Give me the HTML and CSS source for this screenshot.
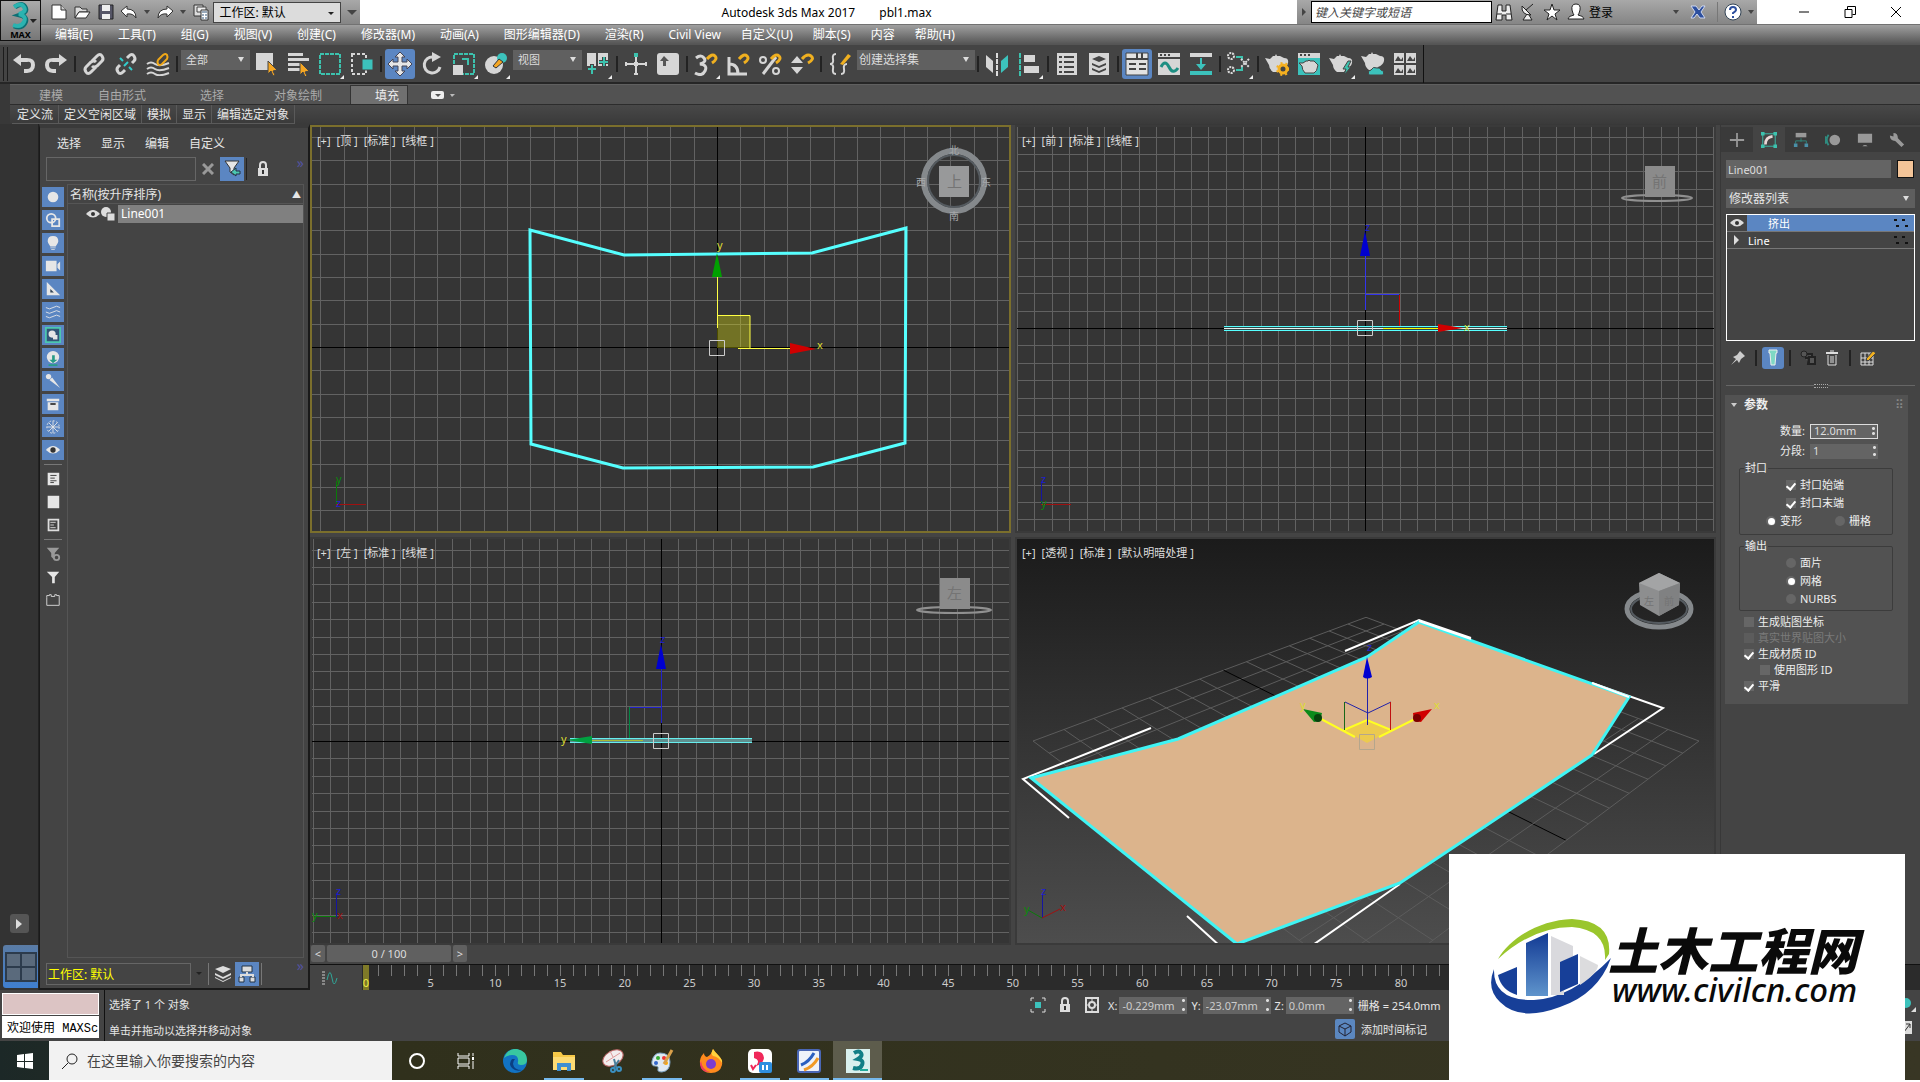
FILE: index.html
```html
<!DOCTYPE html>
<html lang="zh-CN">
<head>
  <meta charset="UTF-8" />
  <meta name="viewport" content="width=device-width, initial-scale=1.0" />
  <title>Autodesk 3ds Max 2017 pbl1.max</title>
  <link rel="stylesheet" href="styles.css">
</head>
<body>
  <div class="app">
    <header class="header">
      <button class="app-logo" aria-label="MAX">
        <svg width="32" height="28" viewBox="0 0 32 28"><path d="M10 5q7-5 10 0t-5 8q8 2 5 8t-11 3" fill="none" stroke="#0d6f74" stroke-width="5"/><path d="M9 5q7-5 10 0t-5 7q8 2 5 8t-11 3" fill="none" stroke="#2bb3b0" stroke-width="4"/><path d="M25 17h7l-4 4z" fill="#222"/></svg>
        <span>MAX</span>
      </button>
      <div class="title-bar">
        <div class="quick-access">
          <button aria-label="新建"><svg width="18" height="18" viewBox="0 0 18 18"><path d="M2 2h9l5 5v9H2z" fill="#fff" stroke="#333"/><path d="M11 2v5h5" fill="#ccc" stroke="#333"/></svg></button>
          <button aria-label="打开"><svg width="18" height="18" viewBox="0 0 18 18"><path d="M2 15V4h5l2 2h5v3H6z" fill="#ddd" stroke="#333"/><path d="M2 15l4-6h11l-4 6z" fill="#fff" stroke="#333"/></svg></button>
          <button aria-label="保存"><svg width="18" height="18" viewBox="0 0 18 18"><path d="M2 2h14v14H2z" fill="#556" stroke="#222"/><path d="M5 2h8v6H5zM5 11h8v5H5z" fill="#eee"/></svg></button>
          <button aria-label="撤消"><svg width="18" height="18" viewBox="0 0 18 18"><path d="M1 8l6-5v3q9 0 9 9-3-5-9-4v3z" fill="#fff" stroke="#333"/></svg></button>
          <i class="caret"></i>
          <button aria-label="重做"><svg width="18" height="18" viewBox="0 0 18 18"><path d="M17 8l-6-5v3Q2 6 2 15q3-5 9-4v3z" fill="#fff" stroke="#333"/></svg></button>
          <i class="caret"></i>
          <button aria-label="项目文件夹"><svg width="18" height="18" viewBox="0 0 18 18"><path d="M2 2h9v11H2z" fill="#ddd" stroke="#333"/><path d="M5 4h9v5H5z" fill="#eee" stroke="#444"/><path d="M9 7h7v10H9z" fill="#fff" stroke="#333"/><path d="M10 9h5M10 12h2M13 12h2M10 15h2M13 15h2" stroke="#357"/></svg></button>
          <label class="combo workspace"><select aria-label="工作区"><option>工作区: 默认</option></select></label>
          <i class="caret big"></i>
        </div>
        <div class="window-title"><span>Autodesk 3ds Max 2017</span><span>pbl1.max</span></div>
        <div class="info-center">
          <i class="caret side"></i>
          <input type="text" placeholder="键入关键字或短语" aria-label="搜索">
          <button aria-label="查找"><svg width="18" height="20" viewBox="0 0 18 20"><path d="M3 3h4v6h4V3h4l2 15h-6v-5H7v5H1z" fill="#eee" stroke="#222"/><path d="M2 12h5M11 12h5" stroke="#222"/></svg></button>
          <button aria-label="通讯中心"><svg width="18" height="20" viewBox="0 0 18 20"><path d="M3 4q-1 9 9 9zM8 12l-4 6h9l-3-5M7 8l7-6" fill="#eee" stroke="#222"/></svg></button>
          <button aria-label="收藏夹"><svg width="18" height="20" viewBox="0 0 18 20"><path d="M9 2l2 6h6l-5 4 2 6-5-4-5 4 2-6-5-4h6z" fill="#fff" stroke="#222"/></svg></button>
          <button class="login"><svg width="18" height="20" viewBox="0 0 18 20"><path d="M9 2q5 0 4 6-1 4-2 5 6 1 6 4H1q0-3 6-4-1-1-2-5-1-6 4-6z" fill="#fff" stroke="#222"/></svg>登录</button>
          <i class="caret push"></i>
          <button class="exchange" aria-label="Exchange"><svg width="18" height="18" viewBox="0 0 18 18"><path d="M2 3h5l3 4 3-4h3l-4 6 4 6h-5l-3-4-3 4H2l4-6z" fill="#2d4f9e" stroke="#cfd8f0"/></svg></button>
          <i class="split"></i>
          <button aria-label="帮助"><svg width="18" height="18" viewBox="0 0 18 18"><circle cx="9" cy="9" r="8" fill="#fff" stroke="#345"/><path d="M6 7q0-3 3-3t3 3q0 1-3 3v1M9 13v2" fill="none" stroke="#2d4f9e" stroke-width="2"/></svg></button>
          <i class="caret"></i>
        </div>
        <div class="window-buttons">
          <button aria-label="最小化"><svg width="12" height="12"><path d="M1 6h10" stroke="#000"/></svg></button>
          <button aria-label="还原"><svg width="12" height="12"><path d="M1 3.500h7v8h-7zM3.500 3.500v-3h8v8h-3" fill="none" stroke="#000"/></svg></button>
          <button aria-label="关闭"><svg width="12" height="12"><path d="M1 1l10 10M11 1L1 11" stroke="#000"/></svg></button>
        </div>
      </div>
      <nav class="menu-bar">
        <button>编辑(E)</button><button>工具(T)</button><button>组(G)</button><button>视图(V)</button><button>创建(C)</button><button>修改器(M)</button><button>动画(A)</button><button>图形编辑器(D)</button><button>渲染(R)</button><button>Civil View</button><button>自定义(U)</button><button>脚本(S)</button><button>内容</button><button>帮助(H)</button>
      </nav>
    </header>

    <div class="toolbar">
      <i class="grip"></i>
      <button aria-label="撤消"><svg viewBox="0 0 24 24"><path d="M1 8l8-6v4h6q8 0 8 7t-8 8h-3v-4h3q4 0 4-4t-4-3H9v4z" fill="#d6d6d6"/></svg></button>
      <button aria-label="重做"><svg viewBox="0 0 24 24"><path d="M23 8l-8-6v4H9q-8 0-8 7t8 8h3v-4H9q-4 0-4-4t4-3h6v4z" fill="#d6d6d6"/></svg></button>
      <i class="sep"></i>
      <button aria-label="选择并链接"><svg viewBox="0 0 24 24" fill="none" stroke="#d6d6d6" stroke-width="3"><path d="M10 9l5-5q3-3 5 0t0 5l-5 5q-3 2-5 0M14 15l-5 5q-3 3-5 0t0-5l5-5q3-2 5 0"/></svg></button>
      <button aria-label="取消链接"><svg viewBox="0 0 24 24" fill="none" stroke="#d6d6d6" stroke-width="3"><path d="M13 6l2-2q3-3 5 0t0 5l-2 2M11 18l-2 2q-3 3-5 0t0-5l2-2"/><path d="M9 9l-3-3M15 15l3 3M10 14l4-4" stroke="#3cc" stroke-width="2"/></svg></button>
      <button aria-label="绑定到空间扭曲"><svg viewBox="0 0 24 24" fill="none" stroke="#d6d6d6" stroke-width="2"><path d="M1 12q4-3 8 0t14-1M1 17q4-3 8 0t14-1M1 22q4-3 8 0t14-1"/><path d="M12 8l5-5q3-2 4 0t0 4l-5 5q-3 2-4 0t0-4" stroke="#f0a818"/></svg></button>
      <i class="sep"></i>
      <label class="combo small"><select aria-label="选择过滤器"><option>全部</option></select></label>
      <button aria-label="选择对象"><svg viewBox="0 0 24 24"><path d="M2 1h17v17H2z" fill="#d6d6d6"/><path d="M14 9l9 9-4 1 2 4-2 1-2-5-3 3z" fill="#f5a623" stroke="#444"/></svg></button>
      <button aria-label="按名称选择"><svg viewBox="0 0 24 24"><path d="M2 1h15v3H2zM2 6h21v3H2zM2 11h14v3H2zM2 16h14v3H2z" fill="#d6d6d6"/><path d="M14 10l9 9-4 1 2 4-2 1-2-5-3 3z" fill="#f5a623" stroke="#444"/></svg></button>
      <button class="fly" aria-label="矩形选择区域"><svg viewBox="0 0 24 24"><path d="M2 2h20v20H2z" fill="none" stroke="#3cc2ae" stroke-width="2" stroke-dasharray="4 1"/></svg></button>
      <button aria-label="窗口/交叉"><svg viewBox="0 0 24 24"><path d="M2 2h14v20H2z" fill="none" stroke="#d6d6d6" stroke-width="2" stroke-dasharray="3 2"/><path d="M12 7h11v11H12z" fill="#3cc2bc" stroke="#444"/></svg></button>
      <i class="sep"></i>
      <button class="active" aria-label="选择并移动"><svg viewBox="0 0 24 24"><path d="M12 0l5 5h-3v5h5V7l5 5-5 5v-3h-5v5h3l-5 5-5-5h3v-5H5v3l-5-5 5-5v3h5V5H7z" fill="#e6e6e6" stroke="#445" stroke-width="1"/></svg></button>
      <button aria-label="选择并旋转"><svg viewBox="0 0 24 24"><path d="M20 15a8 8 0 1 1-7-10" fill="none" stroke="#d6d6d6" stroke-width="3"/><path d="M12 0l9 5-9 5z" fill="#d6d6d6"/></svg></button>
      <button class="fly" aria-label="选择并缩放"><svg viewBox="0 0 24 24"><path d="M2 2h20v20H2z" fill="none" stroke="#3cc2ae" stroke-width="2" stroke-dasharray="4 1"/><path d="M1 13h10v10H1z" fill="#d6d6d6"/><path d="M10 7h6v6" fill="none" stroke="#3cc2ae" stroke-width="2"/></svg></button>
      <button class="fly" aria-label="选择并放置"><svg viewBox="0 0 24 24"><circle cx="10" cy="13" r="9" fill="#d6d6d6"/><circle cx="18" cy="6" r="5" fill="#3cc2bc"/><path d="M9 14l6-7 4 3-7 6z" fill="#f5a623" stroke="#333"/></svg></button>
      <label class="combo small"><select aria-label="参考坐标系"><option>视图</option></select></label>
      <button class="fly" aria-label="使用轴点中心"><svg viewBox="0 0 24 24"><path d="M1 1h9v13H1zM12 1h10v13H12z" fill="#d6d6d6"/><path d="M6 12v11M1 17h10M18 5v11M13 10h10" stroke="#444" stroke-width="4"/><path d="M6 13v9M2 17h8M18 5v9M13 10h9" stroke="#3cc2ae" stroke-width="2"/></svg></button>
      <i class="sep"></i>
      <button aria-label="选择并操纵"><svg viewBox="0 0 24 24"><path d="M12 5v18M1 12h22" stroke="#d6d6d6" stroke-width="2"/><path d="M10 10h4v4h-4zM1 10h2v4H1zM21 10h2v4h-2zM10 21h4v2h-4z" fill="#d6d6d6"/><path d="M10 1h4v4h-4z" fill="#3cc2ae"/></svg></button>
      <button aria-label="键盘快捷键覆盖"><svg viewBox="0 0 24 24"><rect x="1" y="1" width="22" height="22" rx="3" fill="#d6d6d6"/><path d="M8 4l5 5h-3v5H7V9H4z" fill="#555"/></svg></button>
      <i class="sep"></i>
      <button class="fly" aria-label="捕捉开关"><svg viewBox="0 0 24 24"><path d="M2 6q5-4 8 0t-4 6q8 1 5 7t-10 2" fill="none" stroke="#d6d6d6" stroke-width="3"/><path d="M13 7q5-6 8-3t-3 7" fill="none" stroke="#f0b020" stroke-width="3"/></svg></button>
      <button aria-label="角度捕捉"><svg viewBox="0 0 24 24"><path d="M3 5v17h18M3 12q9 0 9 10" fill="none" stroke="#d6d6d6" stroke-width="3"/><path d="M13 7q5-6 8-3t-3 7" fill="none" stroke="#f0b020" stroke-width="3"/></svg></button>
      <button aria-label="百分比捕捉"><svg viewBox="0 0 24 24"><circle cx="5" cy="8" r="3" fill="none" stroke="#d6d6d6" stroke-width="2"/><circle cx="18" cy="19" r="3" fill="none" stroke="#d6d6d6" stroke-width="2"/><path d="M18 5L5 22" stroke="#d6d6d6" stroke-width="3"/><path d="M13 7q5-6 8-3t-3 7" fill="none" stroke="#f0b020" stroke-width="3"/></svg></button>
      <button aria-label="微调器捕捉"><svg viewBox="0 0 24 24"><path d="M1 11l6-7 6 7zM1 15h12l-6 7z" fill="#d6d6d6"/><path d="M12 7q5-6 9-3t-3 7" fill="none" stroke="#f0b020" stroke-width="3"/></svg></button>
      <i class="sep"></i>
      <button aria-label="编辑命名选择集"><svg viewBox="0 0 24 24"><path d="M8 2Q4 2 5 7t-3 5q4 0 3 5t3 5M13 22q4 0 3-5t3-5" fill="none" stroke="#d6d6d6" stroke-width="2"/><path d="M12 12l8-10 3 2-8 9z" fill="#f0b020"/></svg></button>
      <label class="combo wide"><select aria-label="命名选择集"><option>创建选择集</option></select></label>
      <i class="sep"></i>
      <button aria-label="镜像"><svg viewBox="0 0 24 24"><path d="M1 3l7 6v12l-7-6z" fill="#d6d6d6"/><path d="M12 1v23" stroke="#ddd" stroke-width="2" stroke-dasharray="5 1"/><path d="M23 3l-7 6v12l7-6z" fill="#3cc2bc"/></svg></button>
      <button class="fly" aria-label="对齐"><svg viewBox="0 0 24 24"><path d="M3 1v23" stroke="#3cc2ae" stroke-width="2" stroke-dasharray="5 1"/><path d="M7 3h11v7H7zM7 14h15v7H7z" fill="#d6d6d6"/></svg></button>
      <i class="sep"></i>
      <button aria-label="切换场景资源管理器"><svg viewBox="0 0 24 24"><path d="M2 1h20v22H2z" fill="#d6d6d6"/><path d="M4 5h3M9 5h10M4 10h3M9 10h10M4 15h3M9 15h10M4 20h3M9 20h10" stroke="#444" stroke-width="2"/></svg></button>
      <button aria-label="切换层资源管理器"><svg viewBox="0 0 24 24"><path d="M2 1h20v22H2z" fill="#d6d6d6"/><path d="M5 7l7-3 7 3-7 3zM5 11l7 3 7-3v2l-7 3-7-3zM5 16l7 3 7-3v2l-7 3-7-3z" fill="#444"/></svg></button>
      <i class="sep"></i>
      <button class="active" aria-label="切换功能区"><svg viewBox="0 0 24 24"><path d="M1 1h22v22H1z" fill="#e2e2e2" stroke="#444"/><path d="M1 7h22M12 1v6M17 1v6M4 12h7M14 12h7M4 17h7M14 17h7" stroke="#444" stroke-width="2"/></svg></button>
      <button aria-label="曲线编辑器"><svg viewBox="0 0 24 24"><path d="M1 1h22v22H1z" fill="#d6d6d6"/><path d="M1 6h22M3 3h2M7 3h2M11 3h2" stroke="#444" stroke-width="2"/><path d="M4 15q4-8 8 0t9 1" fill="none" stroke="#1d8f83" stroke-width="3"/></svg></button>
      <button aria-label="图解视图"><svg viewBox="0 0 24 24"><path d="M1 1h22v4H1z" fill="#d6d6d6"/><path d="M1 19h22v4H1zM11 6h2v6h4l-5 6-5-6h4z" fill="#3cc2bc"/></svg></button>
      <i class="sep"></i>
      <button class="fly" aria-label="材质编辑器"><svg viewBox="0 0 24 24"><circle cx="4" cy="4" r="3" fill="none" stroke="#ddd" stroke-dasharray="2 1" stroke-width="2"/><circle cx="4" cy="18" r="3" fill="none" stroke="#ddd" stroke-dasharray="2 1" stroke-width="2"/><path d="M9 5h6v3M9 18h6v-3" fill="none" stroke="#3cc2ae" stroke-width="2"/><path d="M14 7l8 8M22 7l-8 8" stroke="#ddd" stroke-width="2" stroke-dasharray="2 1"/></svg></button>
      <i class="sep"></i>
      <button aria-label="渲染设置"><svg viewBox="0 0 24 24"><path d="M0 6l5 1 3-3h2l1-2 1 2h3l4 2q5 0 4 5-1 4-6 6l-2 3H8q-4-3-4-7z" fill="#d6d6d6"/><circle cx="18" cy="17" r="4" fill="#444" stroke="#f5b020" stroke-width="3"/><circle cx="18" cy="17" r="6" fill="none" stroke="#f5b020" stroke-width="2" stroke-dasharray="2 3"/></svg></button>
      <button aria-label="渲染帧窗口"><svg viewBox="0 0 24 24"><path d="M1 1h22v22H1z" fill="#3cc2bc"/><path d="M1 1h22v5H1z" fill="#d6d6d6"/><path d="M3 3h2M7 3h2M11 3h2" stroke="#444" stroke-width="2"/><path d="M2 11h4l3-2h2l1-1 1 1h4l4 4q-1 7-4 8H8q-3-3-3-7z" fill="#d6d6d6" stroke="#444"/></svg></button>
      <button class="fly" aria-label="渲染产品"><svg viewBox="0 0 24 24"><path d="M0 6l5 1 3-3h2l1-2 1 2h3l4 2q5 0 4 5-1 4-6 6l-2 3H8q-4-3-4-7z" fill="#d6d6d6"/><path d="M19 9l-5 8h3l-2 6 7-8h-3l3-6z" fill="#3cc2ae" stroke="#444"/></svg></button>
      <button aria-label="在云中渲染"><svg viewBox="0 0 24 24"><path d="M0 4l5 1 3-3h2l1-2 1 2h3l4 2q5 0 4 5-1 4-6 6l-2 3H8q-4-3-4-7z" fill="#d6d6d6"/><path d="M8 23q-2-4 2-5 2-4 6-2 3-1 4 2 4 1 2 5z" fill="#3cc2bc" stroke="#444"/></svg></button>
      <button aria-label="打开资源库"><svg viewBox="0 0 24 24"><path d="M1 1h10v10H1zM13 1h10v10H13zM1 13h10v10H1zM13 13h10v10H13z" fill="#d6d6d6"/><path d="M2 9l3-5 3 4 2-3v4zM14 9l3-5 3 4 2-3v4zM2 21l3-5 3 4 2-3v4zM14 21l3-5 3 4 2-3v4z" fill="#444"/></svg></button>
      <i class="toolbar-end"></i>
    </div>

    <div class="ribbon">
      <div class="ribbon-tabs">
        <button>建模</button><button>自由形式</button><button>选择</button><button>对象绘制</button><button class="current">填充</button>
        <button class="ribbon-toggle" aria-label="最小化"><svg width="28" height="10"><rect width="13" height="8" y="1" rx="2" fill="#eee"/><path d="M4 4h6L7 7z" fill="#555"/><path d="M19 4h5l-3 3z" fill="#bbb"/></svg></button>
      </div>
      <div class="ribbon-panels">
        <button>定义流</button><button>定义空闲区域</button><button>模拟</button><button>显示</button><button>编辑选定对象</button>
      </div>
    </div>

    <main class="main">
      <aside class="dock">
        <button class="play" aria-label="展开"><svg width="10" height="12"><path d="M2 1l6 5-6 5z" fill="#ddd"/></svg></button>
        <button class="layout" aria-label="视口布局"><svg width="32" height="30" viewBox="0 0 32 30"><path d="M1 1h30v28H1zM16 1v28M1 15h30" fill="#5a6a7c" stroke="#2c3b4c" stroke-width="2"/></svg></button>
      </aside>

      <section class="explorer">
        <nav class="explorer-menu"><button>选择</button><button>显示</button><button>编辑</button><button>自定义</button></nav>
        <div class="explorer-search">
          <input type="text" aria-label="查找对象">
          <button class="clear" aria-label="清除"><svg width="12" height="12"><path d="M1 1l10 10M11 1L1 11" stroke="#999" stroke-width="3"/></svg></button>
          <button class="on" aria-label="过滤器"><svg width="18" height="18"><path d="M2 1h14l-5 7v7l-4-3V8z" fill="#e6e6e6" stroke="#333"/><path d="M17 11h-4V8l-5 4 5 4v-2h4z" fill="#4cc7b0" stroke="#234"/></svg></button>
          <i class="bar"></i>
          <button class="lock" aria-label="锁定"><svg width="12" height="16"><path d="M3 7V4q0-3 3-3t3 3v3" fill="none" stroke="#ddd" stroke-width="2"/><path d="M1 7h10v8H1z" fill="#ddd"/><path d="M6 9v4" stroke="#333" stroke-width="2"/></svg></button>
          <span class="more">»</span>
        </div>
        <div class="explorer-body">
          <div class="filters">
            <button class="on" aria-label="几何体"><svg viewBox="0 0 18 18"><circle cx="9" cy="9" r="6"/></svg></button>
            <button class="on" aria-label="图形"><svg viewBox="0 0 18 18"><circle cx="7" cy="7" r="5" fill="none" stroke="#e6e6e6" stroke-width="2"/><path d="M8 8h8v8H8z" fill="none" stroke="#e6e6e6" stroke-width="2"/></svg></button>
            <button class="on" aria-label="灯光"><svg viewBox="0 0 18 18"><path d="M9 1q6 0 6 6 0 2-3 6H6Q3 9 3 7q0-6 6-6zM6 14h6v1H6zM7 16h4v1H7z"/></svg></button>
            <button class="on" aria-label="摄影机"><svg viewBox="0 0 18 18"><path d="M1 3h12v12H1zM14 7l3-3v10l-3-3z"/></svg></button>
            <button class="on" aria-label="辅助对象"><svg viewBox="0 0 18 18"><path d="M2 1l15 15H2z"/><path d="M6 9v4h4z" fill="#345"/></svg></button>
            <button class="on" aria-label="空间扭曲"><svg viewBox="0 0 18 18" class="lines"><path d="M1 4q4 3 8 0t8 0M1 9q4 3 8 0t8 0M1 14q4 3 8 0t8 0"/></svg></button>
            <button class="on" aria-label="组"><svg viewBox="0 0 18 18"><path d="M1 1h16v16H1z" fill="#357" stroke="#4cc7b0" stroke-width="2"/><circle cx="8" cy="8" r="4"/><path d="M9 9h5v5H9z"/></svg></button>
            <button class="on" aria-label="外部参考"><svg viewBox="0 0 18 18"><circle cx="9" cy="8" r="7"/><path d="M8 6h3v5h3l-5 4-4-4h3zM4 16h10v2H4z" fill="#289b86"/></svg></button>
            <button class="on" aria-label="骨骼"><svg viewBox="0 0 18 18"><circle cx="4" cy="4" r="3"/><path d="M5 8l3-3 9 12z"/></svg></button>
            <button class="on" aria-label="容器"><svg viewBox="0 0 18 18"><path d="M2 3h14v3H2zM3 7h12v9H3z"/><path d="M6 9h6" stroke="#333" stroke-width="2"/></svg></button>
            <button class="on" aria-label="冻结"><svg viewBox="0 0 18 18" class="lines"><path d="M9 2v14M2 9h14M4 4l10 10M14 4L4 14"/><circle cx="9" cy="9" r="7" fill="none" stroke-dasharray="2 2"/></svg></button>
            <button class="on" aria-label="隐藏"><svg viewBox="0 0 18 18"><path d="M1 9q8-9 16 0-8 8-16 0z"/><circle cx="9" cy="9" r="3" fill="#333"/></svg></button>
            <i class="rule"></i>
            <button aria-label="全部"><svg viewBox="0 0 18 18"><path d="M3 2h13v14H3z"/><path d="M6 5h7M6 8h5M6 11h7M6 13h4" stroke="#333"/></svg></button>
            <button aria-label="无"><svg viewBox="0 0 18 18"><path d="M3 2h13v14H3z"/></svg></button>
            <button aria-label="反转"><svg viewBox="0 0 18 18"><path d="M4 3h11v12H4z" fill="none" stroke="#ddd" stroke-width="2"/><path d="M6 6h6M6 9h4M6 12h6" stroke="#ddd"/></svg></button>
            <i class="rule"></i>
            <button class="dim" aria-label="配置过滤器"><svg viewBox="0 0 18 18"><path d="M2 2h14l-5 6v8l-4-4V8z"/><circle cx="13" cy="13" r="3" fill="#444" stroke="#999" stroke-width="2"/></svg></button>
            <button aria-label="过滤"><svg viewBox="0 0 18 18"><path d="M2 3h14l-5 6v7H8V9z"/></svg></button>
            <button aria-label="集合"><svg viewBox="0 0 18 18"><path d="M2 6V4h3V3h2v2h4V3h2v1h3v11H2z" fill="none" stroke="#ddd" stroke-width="1"/></svg></button>
          </div>
          <div class="object-list">
            <button class="list-head"><span>名称(按升序排序)</span><i>▲</i></button>
            <ul>
              <li>
                <svg width="14" height="12" viewBox="0 0 14 12"><path d="M0 6q7-8 14 0-7 7-14 0z" fill="#ddd"/><circle cx="7" cy="6" r="2" fill="#333"/></svg>
                <svg width="14" height="14" viewBox="0 0 14 14"><circle cx="5" cy="5" r="5" fill="#ddd"/><path d="M6 6h8v8H6z" fill="#ddd" stroke="#444"/></svg>
                <span>Line001</span>
              </li>
            </ul>
          </div>
        </div>
        <div class="explorer-foot">
          <label class="combo plain"><select aria-label="工作区"><option>工作区: 默认</option></select></label>
          <i class="bar"></i>
          <button aria-label="按层排序"><svg width="16" height="18"><path d="M0 4l8-3 8 3-8 4zM0 8l8 4 8-4v2l-8 4-8-4zM0 12l8 4 8-4v1l-8 4-8-4z" fill="#ddd"/></svg></button>
          <button class="on" aria-label="按层次排序"><svg width="18" height="18"><path d="M4 1h10v6H4zM1 12h5v5H1zM12 12h5v5h-5z" fill="#ddd" stroke="#234"/><path d="M9 7v3M3 12v-2h12v2" fill="none" stroke="#ddd" stroke-width="2"/></svg></button>
          <i class="bar"></i>
          <span class="more">»</span>
        </div>
      </section>

      <div class="work">
        <div class="work-top">
          <section class="viewports">
            <div class="viewport selected">
              <div class="view-label"><span>[+]</span><span>[顶 ]</span><span>[标准 ]</span><span>[线框 ]</span></div>
              <svg class="canvas">
                <defs>
                  <pattern id="gridTop" x="55" y="10" width="70" height="70" patternUnits="userSpaceOnUse"><path d="M0 0h1v70H0zM23 0h1v70h-1zM47 0h1v70h-1zM0 0h70v1H0zM0 23h70v1H0zM0 47h70v1H0z" fill="#626262"/></pattern>
                </defs>
                <rect width="100%" height="100%" fill="url(#gridTop)"/>
                <rect x="405" width="1" height="100%" fill="#000"/><rect y="220" width="100%" height="1" fill="#000"/>
                <path class="spline" d="M218 103L312 128 500 126 594 101 593 316 501 340 311 341 219 317z"/>
                <path d="M405 188h33v33h-33z" fill="#ff0" fill-opacity=".3"/>
                <path d="M405.500 201V150M405 188.500h33v33M426 221.500h52" fill="none" stroke="#ff4"/>
                <path d="M405 126l5 24h-10z" fill="#00a000"/><path d="M504 222l-26-6v11z" fill="#d00000"/>
                <path d="M397.500 213.500h15v15h-15z" class="pivot"/>
                <text x="405" y="122" class="yl">y</text><text x="505" y="222" class="yl">x</text>
                <path d="M24.500 378v-24" stroke="#0a7a0a"/><path d="M24 377.500h30" stroke="#a01010"/>
                <text x="24" y="356" class="gl">y</text><text x="24" y="380" class="bl">z</text>
                <circle cx="642" cy="54" r="30" fill="none" stroke="#85898c" stroke-width="6"/><circle cx="642" cy="54" r="26" fill="none" stroke="#555b60" stroke-width="2"/>
                <path d="M627 39h30v31h-30z" fill="#98999a"/><text x="635" y="60" class="cube">上</text>
                <text x="637" y="27" class="dir">北</text><text x="637" y="93" class="dir">南</text><text x="604" y="59" class="dir">西</text><text x="669" y="59" class="dir">东</text>
              </svg>
            </div>
            <div class="viewport">
              <div class="view-label"><span>[+]</span><span>[前 ]</span><span>[标准 ]</span><span>[线框 ]</span></div>
              <svg class="canvas">
                <defs>
                  <pattern id="gridFront" x="0" y="27" width="87" height="87" patternUnits="userSpaceOnUse"><path d="M0 0h1v87H0zM17 0h1v87h-1zM35 0h1v87h-1zM52 0h1v87h-1zM70 0h1v87h-1zM0 0h87v1H0zM0 17h87v1H0zM0 35h87v1H0zM0 52h87v1H0zM0 70h87v1H0z" fill="#626262"/></pattern>
                </defs>
                <rect width="100%" height="100%" fill="url(#gridFront)"/>
                <rect x="348" width="1" height="100%" fill="#000"/><rect y="201" width="100%" height="1" fill="#000"/>
                <path d="M207 199h283v5H207z" fill="#2a4a4a"/><path d="M207 199.500h283M207 203.500h283" stroke="#5ff"/><path d="M207 201.500h283" stroke="#eee"/>
                <path d="M348.500 183v-54M348 167.500h34" stroke="#33e" fill="none"/><path d="M382.500 168v31" stroke="#c00"/>
                <path d="M366 201.500h55" stroke="#ff0"/>
                <path d="M348 104l5 25h-10z" fill="#0000d0"/><path d="M446 201l-25-4v8z" fill="#d00000"/>
                <path d="M340.500 193.500h15v15h-15z" class="pivot"/>
                <text x="348" y="104" class="bl">z</text><text x="447" y="204" class="yl">x</text>
                <path d="M24.500 378v-24" stroke="#1515a0"/><path d="M24 377.500h30" stroke="#a01010"/>
                <text x="24" y="356" class="bl">z</text><text x="24" y="380" class="gl">y</text>
                <ellipse cx="640" cy="71" rx="35" ry="3" fill="none" stroke="#909090" stroke-width="2"/>
                <path d="M628 39h30v31h-30z" fill="#8b8b8b"/><text x="635" y="60" class="cube">前</text>
              </svg>
            </div>
            <div class="viewport">
              <div class="view-label"><span>[+]</span><span>[左 ]</span><span>[标准 ]</span><span>[线框 ]</span></div>
              <svg class="canvas">
                <defs>
                  <pattern id="gridLeft" x="1" y="28" width="87" height="87" patternUnits="userSpaceOnUse"><path d="M0 0h1v87H0zM17 0h1v87h-1zM35 0h1v87h-1zM52 0h1v87h-1zM70 0h1v87h-1zM0 0h87v1H0zM0 17h87v1H0zM0 35h87v1H0zM0 52h87v1H0zM0 70h87v1H0z" fill="#626262"/></pattern>
                </defs>
                <rect width="100%" height="100%" fill="url(#gridLeft)"/>
                <rect x="349" width="1" height="100%" fill="#000"/><rect y="202" width="100%" height="1" fill="#000"/>
                <path d="M258 199h182v5H258z" fill="#5f8f8f"/><path d="M258 199.500h182M258 203.500h182" stroke="#6ee"/><path d="M279 201.500h52" stroke="#ab3"/>
                <path d="M349.500 184v-54M349 168.500h-32" stroke="#22c" fill="none"/><path d="M317.500 168v31" stroke="#084"/>
                <path d="M349 105l5 25h-10z" fill="#0000d0"/><path d="M255 201l25-4v8z" fill="#00a040"/>
                <path d="M341.500 194.500h15v15h-15z" class="pivot"/>
                <text x="348" y="104" class="bl">z</text><text x="249" y="204" class="yl">y</text>
                <path d="M24.500 378v-24" stroke="#1515a0"/><path d="M4 377.500h20" stroke="#0a7a0a"/>
                <text x="24" y="356" class="bl">z</text><text x="0" y="380" class="gl">y</text><text x="25" y="380" class="rl">x</text>
                <ellipse cx="642" cy="71" rx="37" ry="3" fill="none" stroke="#909090" stroke-width="2"/>
                <path d="M628 39h30v31h-30z" fill="#8b8b8b"/><text x="635" y="60" class="cube">左</text>
              </svg>
            </div>
            <div class="viewport shaded">
              <div class="view-label"><span>[+]</span><span>[透视 ]</span><span>[标准 ]</span><span>[默认明暗处理 ]</span></div>
              <svg class="canvas">
                <g id="floor"></g>
                <path d="M328 112L402 81 454 99M575 144L646 169 577 215M134 189L6 240 52 279M170 377L204 408M383 345L293 408" fill="none" stroke="#fff" stroke-width="2"/>
                <path d="M402 83L612 158 575 216 383 344 220 405 14 239 161 200 350 118z" fill="#dcb48c" stroke="#3ff4f4" stroke-width="3"/>
                <path d="M402 82l52 18M575 144l37 14" stroke="#fff" stroke-width="2"/>
                <path d="M327 191l23-10 24 10-24 13z" fill="#f0d040" fill-opacity=".8"/>
                <path d="M304 180l34 18M398 180l-36 18M327 191l23-10 24 10" fill="none" stroke="#ff2" stroke-width="2"/>
                <path d="M350.500 186v-47M328 163l23 11 23-11" fill="none" stroke="#22a"/><path d="M327.500 163v28" stroke="#186818"/><path d="M373.500 163v28" stroke="#c01010"/>
                <path d="M350 118l5 20q-5 3-9 0z" fill="#0000d0"/>
                <path d="M286 170l19 4-2 8-6 1z" fill="#0a8a1a"/><path d="M415 170l-19 4 1 8 7 1z" fill="#d00000"/>
                <circle cx="301" cy="179" r="4" fill="#06420c"/><circle cx="400" cy="179" r="4" fill="#7a0000"/>
                <path d="M342.500 195.500h15v15h-15z" fill="none" stroke="#b5a68c"/>
                <text x="350" y="112" class="bl">z</text><text x="283" y="170" class="yl">y</text><text x="417" y="170" class="yl">x</text>
                <path d="M25.500 379v-24" stroke="#1515a0"/><path d="M25 379l18-9" stroke="#a01010"/><path d="M25 379l-14-8" stroke="#0a7a0a"/>
                <text x="24" y="356" class="bl">z</text><text x="7" y="374" class="gl">y</text><text x="43" y="372" class="rl">x</text>
                <ellipse cx="642" cy="70" rx="32" ry="18" fill="none" stroke="#85898c" stroke-width="5"/><ellipse cx="642" cy="70" rx="28" ry="14" fill="none" stroke="#555b60" stroke-width="2"/>
                <path d="M642 34l21 10-1 22-20 11-19-11-1-22z" fill="#8d8e8f"/><path d="M642 34l21 10-21 8-20-8z" fill="#a3a4a5"/><path d="M642 52l21-8-1 22-20 11z" fill="#808182"/>
                <text x="627" y="66" class="cube tiny">左</text><text x="647" y="66" class="cube tiny">前</text>
              </svg>
            </div>
          </section>

          <aside class="command">
            <div class="command-tabs">
              <button aria-label="创建"><svg viewBox="0 0 18 18"><path d="M9 1v16M1 9h16" stroke="#999" stroke-width="2"/></svg></button>
              <button class="current" aria-label="修改"><svg viewBox="0 0 18 18"><path d="M2 2h14v14H2z" fill="none" stroke="#3cc2ae"/><path d="M0 0h4v4H0zM14 0h4v4h-4zM0 14h4v4H0zM14 14h4v4h-4z" fill="#3cc2ae"/><path d="M5 14q0-8 8-9" fill="none" stroke="#ead6d6" stroke-width="3"/></svg></button>
              <button aria-label="层次"><svg viewBox="0 0 18 18"><path d="M3 1h12v5H3z" fill="#999"/><path d="M9 7v4M3 13v-3h12v3" fill="none" stroke="#2f8c80"/><path d="M1 13h4v4H1zM13 13h4v4h-4z" fill="#4a90a8"/></svg></button>
              <button aria-label="运动"><svg viewBox="0 0 18 18"><circle cx="11" cy="9" r="6" fill="#999"/><path d="M4 3q-4 6 0 12M1 5q-2 4 0 8" fill="none" stroke="#2f8c80" stroke-width="2"/></svg></button>
              <button aria-label="显示"><svg viewBox="0 0 18 18"><path d="M1 2h16v10H1zM6 16q3-3 6 0z" fill="#999"/></svg></button>
              <button aria-label="实用程序"><svg viewBox="0 0 18 18"><path d="M1 4l4 1V1q5 0 5 6l7 7-3 3-7-7Q1 10 1 4z" fill="#999"/></svg></button>
            </div>
            <div class="object-name"><input type="text" value="Line001" aria-label="对象名称"><button class="swatch" aria-label="对象颜色"></button></div>
            <label class="combo modifiers"><select aria-label="修改器列表"><option>修改器列表</option></select></label>
            <ul class="stack">
              <li class="current"><svg width="14" height="12" viewBox="0 0 14 12"><path d="M0 6q7-8 14 0-7 7-14 0z" fill="#ddd"/><circle cx="7" cy="6" r="2" fill="#333"/></svg><span class="indent">挤出</span><svg width="16" height="10"><path d="M1 1h3v2H1zM9 1h3v2H9zM3 7h3v2H3zM12 7h3v2h-3z" fill="#111"/></svg></li>
              <li><svg width="14" height="12"><path d="M4 1l5 5-5 5z" fill="#ddd"/></svg><span>Line</span><svg width="16" height="10"><path d="M1 1h3v2H1zM9 1h3v2H9zM3 7h3v2H3zM12 7h3v2h-3z" fill="#111"/></svg></li>
            </ul>
            <div class="stack-tools">
              <button aria-label="锁定堆栈"><svg width="16" height="16"><path d="M1 15l5-6-3-2 4-2 3-4 5 5-4 3-2 4-2-3z" fill="#ccc"/></svg></button>
              <i class="bar"></i>
              <button class="on" aria-label="显示最终结果"><svg width="10" height="18"><path d="M1 1h8v3H8l-1 12H3L2 4H1z" fill="#7fd8c4" stroke="#eee"/></svg></button>
              <i class="bar"></i>
              <button aria-label="使唯一"><svg width="16" height="16"><circle cx="4" cy="4" r="3" fill="#555" stroke="#222"/><path d="M7 4h5v4M5 8h4v5M9 7h6v7H8z" fill="#555" stroke="#222" stroke-width="2"/></svg></button>
              <button aria-label="移除修改器"><svg width="12" height="16"><path d="M0 3h12M4 1h4M2 5v10h8V5M5 6v7M7 6v7" fill="none" stroke="#ddd" stroke-width="1"/><path d="M0 2h12v2H0z" fill="#ddd"/></svg></button>
              <i class="bar"></i>
              <button aria-label="配置修改器集"><svg width="16" height="16"><path d="M1 3h12v12H1zM1 8h12M5 3v12M9 3v12M1 12h12" fill="none" stroke="#ddd"/><path d="M6 9l7-8 3 2-8 8z" fill="#f0b020" stroke="#444"/></svg></button>
            </div>
            <div class="splitter"><i></i></div>
            <form class="rollout">
              <h2><i class="caret light"></i>参数<span>⠿</span></h2>
              <div class="spin"><label for="amount">数量:</label><input class="focus" id="amount" type="text" value="12.0mm"></div>
              <div class="spin"><label for="segments">分段:</label><input id="segments" type="text" value="1"></div>
              <fieldset>
                <legend>封口</legend>
                <label class="in"><input type="checkbox" checked>封口始端</label>
                <label class="in"><input type="checkbox" checked>封口末端</label>
                <div class="pair"><label><input type="radio" name="cap" checked>变形</label><label><input type="radio" name="cap">栅格</label></div>
              </fieldset>
              <fieldset>
                <legend>输出</legend>
                <label class="in"><input type="radio" name="out">面片</label>
                <label class="in"><input type="radio" name="out" checked>网格</label>
                <label class="in"><input type="radio" name="out">NURBS</label>
              </fieldset>
              <div class="checks">
                <label><input type="checkbox">生成贴图坐标</label>
                <label class="off"><input type="checkbox" disabled>真实世界贴图大小</label>
                <label><input type="checkbox" checked>生成材质 ID</label>
                <label class="sub"><input type="checkbox">使用图形 ID</label>
                <label><input type="checkbox" checked>平滑</label>
              </div>
            </form>
          </aside>
        </div>
        <div class="time-slider"><button>&lt;</button><button class="frame">0 / 100</button><button>&gt;</button></div>
        <div class="track">
          <button class="curve" aria-label="打开迷你曲线编辑器"><svg width="16" height="14"><path d="M0 1h3M0 4h3M0 7h3M0 10h3M0 13h3" stroke="#ccc"/><path d="M5 9q3-14 5-2t5 0" fill="none" stroke="#2fa89a" stroke-width="1"/></svg></button>
          <div class="ruler" id="ruler"></div>
        </div>
      </div>
    </main>

    <footer class="status">
      <div class="listener"><input type="text" aria-label="宏录制器"><input type="text" aria-label="侦听器" value="欢迎使用 MAXScr"></div>
      <div class="prompts"><p>选择了 1 个 对象</p><p>单击并拖动以选择并移动对象</p></div>
      <div class="coords">
        <div class="coord-row">
          <button aria-label="孤立"><svg width="16" height="16"><path d="M1 4V1h3M12 1h3v3M15 12v3h-3M4 15H1v-3" fill="none" stroke="#ddd"/><path d="M5 5h6v6H5z" fill="#3cc2bc"/></svg></button>
          <button aria-label="选择锁定"><svg width="12" height="16"><path d="M3 7V4q0-3 3-3t3 3v3" fill="none" stroke="#ddd" stroke-width="2"/><path d="M1 7h10v8H1z" fill="#ddd"/><path d="M6 9v4" stroke="#333" stroke-width="2"/></svg></button>
          <button aria-label="绝对模式"><svg width="14" height="16"><path d="M1 1h12v14H1z" fill="none" stroke="#ddd" stroke-width="2"/><circle cx="7" cy="8" r="3" fill="none" stroke="#ddd" stroke-width="2"/><path d="M7 1v3M7 12v3M1 8h2M11 8h2" stroke="#ddd"/></svg></button>
          <label>X:<input type="text" value="-0.229mm"></label>
          <label>Y:<input type="text" value="-23.07mm"></label>
          <label>Z:<input type="text" value="0.0mm"></label>
          <span>栅格 = 254.0mm</span>
        </div>
        <button class="time-tag"><svg width="20" height="20" viewBox="0 0 20 20"><rect width="20" height="20" rx="2" fill="#5b87c0"/><path d="M10 4l6 3v6l-6 4-6-4V7zM4 7l6 3 6-3M10 10v7" fill="none" stroke="#223"/></svg>添加时间标记</button>
      </div>
      <div class="nav-tools">
        <svg width="14" height="16"><circle cx="4" cy="7" r="5" fill="#3cc2bc"/><path d="M14 11v5H9z" fill="#ddd"/></svg>
        <svg width="14" height="16"><path d="M0 1h10v13H0z" fill="#ddd"/><path d="M2 12l6-8M4 4h4v4" fill="none" stroke="#333"/></svg>
      </div>
    </footer>

    <div class="taskbar">
      <button class="start" aria-label="开始"><svg width="16" height="16"><path d="M0 2l7-1v7H0zM8 1l8-1v8H8zM0 9h7v6l-7-1zM8 9h8v7l-8-1z" fill="#fff"/></svg></button>
      <label class="search"><svg width="18" height="18"><circle cx="11" cy="7" r="5" fill="none" stroke="#222" stroke-width="1"/><path d="M7 11l-6 6" stroke="#222" stroke-width="1"/></svg><input type="text" placeholder="在这里输入你要搜索的内容"></label>
      <button aria-label="Cortana"><svg viewBox="0 0 24 24"><circle cx="12" cy="12" r="7" fill="none" stroke="#fff" stroke-width="2"/></svg></button>
      <button aria-label="任务视图"><svg viewBox="0 0 24 24"><path d="M4 4v3h11V4M4 20v-3h11v3M4 9h11v6H4zM19 4v3M19 12v8" fill="none" stroke="#fff"/><path d="M18 8h2v3h-2z" fill="#fff"/></svg></button>
      <button aria-label="Edge"><svg viewBox="0 0 24 24"><circle cx="12" cy="12" r="12" fill="#1273c4"/><path d="M1 9Q5-1 14 0q10 2 10 11 0 5-6 5-4 0-3-3 1-7-6-7-5 0-8 3z" fill="#38c6a0"/><path d="M9 10q-4 5 0 9 4 4 10 2-8 0-9-6 0-3 2-5z" fill="#0b3f83"/></svg></button>
      <button class="open" aria-label="文件资源管理器"><svg viewBox="0 0 24 24"><path d="M1 3h8l2 3h12v15H1z" fill="#f7c948"/><path d="M1 8h22v13H1z" fill="#fddb74"/><path d="M5 22v-8h14v8h-4v-4H9v4z" fill="#3f8fd2"/></svg></button>
      <button aria-label="截图工具"><svg viewBox="0 0 24 24"><ellipse cx="12" cy="9" rx="11" ry="7" fill="#f3eeee" stroke="#b66" transform="rotate(-30 12 9)"/><path d="M5 13l14-9M12 8l-3-6" stroke="#d99"/><path d="M13 10l3 11M18 11l-6 9" stroke="#4a7f9c" stroke-width="2"/><circle cx="18" cy="20" r="2" fill="none" stroke="#3a8fc0" stroke-width="2"/><circle cx="12" cy="21" r="2" fill="none" stroke="#3a8fc0" stroke-width="2"/></svg></button>
      <button class="open" aria-label="画图"><svg viewBox="0 0 24 24"><path d="M10 4q10 0 10 9t-8 10q-5 0-4-3t-3-3q-4 0-3-5 2-8 8-8z" fill="#dfe9f2" stroke="#7aa0c0"/><circle cx="8" cy="9" r="2" fill="#3a3"/><circle cx="14" cy="9" r="2" fill="#e33"/><circle cx="16" cy="14" r="2" fill="#fa0"/><circle cx="6" cy="14" r="2" fill="#36c"/><path d="M22 1l-8 14" stroke="#d9a04a" stroke-width="3"/></svg></button>
      <button aria-label="Firefox"><svg viewBox="0 0 24 24"><path d="M14 0q2 3 5 6 5 5 4 10-2 8-11 8T1 15Q0 9 5 4q0 3 3 4 5-3 6-8z" fill="#ff8a1e"/><path d="M14 0q2 3 5 6 5 5 4 8-3-6-9-7-3-2 0-7z" fill="#ffd23d"/><circle cx="12" cy="15" r="5" fill="#7a3bd0"/><path d="M2 12q1 9 9 11-9 1-10-8z" fill="#f03a5f"/></svg></button>
      <button class="open" aria-label="视频"><svg viewBox="0 0 24 24"><rect width="24" height="24" rx="5" fill="#fff"/><path d="M6 3q9-2 10 6-1 6-8 8 5-6-2-8z" fill="#f0285a"/><path d="M3 16l2 4 3-4" stroke="#f0285a" stroke-width="2" fill="none"/><rect x="11" y="13" width="13" height="11" rx="2" fill="#2f8fe0"/><path d="M15 16v5M19 16v5" stroke="#fff" stroke-width="2"/></svg></button>
      <button class="open" aria-label="看图"><svg viewBox="0 0 24 24"><rect x="1" y="1" width="22" height="22" rx="2" fill="#eef2fa" stroke="#4a67b5" stroke-width="2"/><path d="M4 16Q12 13 17 4" stroke="#2b5fc0" stroke-width="3" fill="none"/><path d="M7 21q9-3 14-12" stroke="#f09a28" stroke-width="3" fill="none"/></svg></button>
      <button class="open now" aria-label="3ds Max"><svg viewBox="0 0 24 24"><path d="M0 0h24v24H0z" fill="#d9f0ee"/><path d="M8 4q5-3 7 0t-3 6q6 1 4 6t-9 3" fill="none" stroke="#127f86" stroke-width="4"/><path d="M14 21h8" stroke="#2a9" stroke-width="2"/></svg></button>
    </div>
  </div>

  <div class="brand">
    <svg width="124" height="100" viewBox="0 0 124 100">
      <defs><linearGradient id="tower" x1="0" x2="0" y1="0" y2="1"><stop offset="0" stop-color="#123a94"/><stop offset="1" stop-color="#5f94cc"/></linearGradient></defs>
      <path d="M10 43C22 22 52 4 84 3q40 2 37 35l-4 6q2-30-33-33Q45 11 10 43z" fill="#9ac62c"/>
      <path d="M6 53q-1 32 40 31 38-2 77-42Q110 78 72 91q-40 15-60-5Q-2 73 6 53z" fill="#173f98"/>
      <path d="M63 20l22 10v10l-9 5v34H63z" fill="#d9d9dd"/><path d="M92 40l18 9q0 8-18 20z" fill="#dcdcde"/>
      <path d="M38 27l22-10v63H38z" fill="url(#tower)"/><path d="M10 59l19-8v28q-16-5-19-20z" fill="#173f98"/><path d="M72 46l18-8v30l-18 8z" fill="#173f98"/>
    </svg>
    <div class="brand-text"><strong>土木工程网</strong><span>www.civilcn.com</span></div>
  </div>

  <script src="script.js"></script>
</body>
</html>
```
FILE: styles.css
```css
* { box-sizing: border-box; }
body {
  margin: 0;
  background: #fff;
  color: #e6e6e6;
  font: 12px "Noto Sans", "Noto Sans CJK SC", sans-serif;
  overflow: hidden;
}
button, input, select {
  font: inherit;
  color: inherit;
  background: none;
  border: 0;
  padding: 0;
  margin: 0;
  border-radius: 0;
  white-space: nowrap;
}
button { display: flex; align-items: center; justify-content: center; }
ul, p, h2, fieldset { margin: 0; padding: 0; list-style: none; }
svg { display: block; flex: none; }
.app {
  display: flex;
  flex-direction: column;
  height: calc(100vh - 2px);
  background: #444;
}

/* 标题栏和菜单 */
.header {
  display: grid;
  grid-template-columns: 41px 1fr;
  grid-template-rows: 24px 21px;
  background: linear-gradient(#444 24px, #a0a0a0 25px, #555 44px);
}
.app-logo {
  grid-row: 1 / 3;
  height: 41px;
  flex-direction: column;
  background: linear-gradient(#aaa, #777);
  border: 1px solid #111;
  color: #000;
  font-size: 9px;
  font-weight: bold;
  line-height: 10px;
}
.title-bar { display: flex; background: #fff; color: #000; }
.quick-access, .info-center {
  display: flex;
  align-items: center;
  background: linear-gradient(#a8a8a8, #858585);
}
.quick-access { width: 319px; padding-left: 6px; }
.quick-access button { width: 24px; }
.caret {
  border: 3px solid transparent;
  border-top: 4px solid #444;
  border-bottom: 0;
  margin: 0 3px;
}
.caret.big { border-width: 5px 5px 0; }
.caret.side { border: 4px solid transparent; border-left-color: #444; border-right: 0; margin: 0 5px; }
.caret.light { border-top-color: #ccc; }
.window-title { flex: 1; display: flex; gap: 24px; align-items: center; justify-content: center; padding-right: 4px; }
.info-center { width: 460px; }
.info-center input {
  width: 181px;
  height: 22px;
  background: #fff;
  border: 1px solid #000;
  padding: 0 3px;
  font-style: italic;
}
.info-center input::placeholder, .search input::placeholder { color: #444; opacity: 1; }
.info-center button { width: 24px; }
.info-center .login { width: 52px; gap: 4px; }
.caret.push { margin-left: auto; }
.info-center .exchange { margin: 0 4px; }
.split { width: 1px; height: 20px; background: #777; margin: 0 3px; }
.window-buttons { display: flex; width: 163px; padding-left: 24px; }
.window-buttons button { width: 46px; }
.menu-bar { display: flex; gap: 25px; padding-left: 14px; }
.menu-bar button { color: #fff; height: 20px; }
.menu-bar button:nth-child(n+11) { margin-left: -5px; }

/* 下拉框 */
.combo { position: relative; display: flex; align-items: center; }
.combo select { appearance: none; width: 100%; height: 100%; padding-left: 5px; }
.combo::after {
  content: "";
  position: absolute;
  right: 6px;
  top: 7px;
  border: 3px solid transparent;
  border-top: 5px solid #ddd;
  border-bottom: 0;
  pointer-events: none;
}
.workspace { width: 130px; height: 21px; background: #dcdcdc; border: 1px solid #444; margin: 0 3px 0 1px; }
.workspace::after, .plain::after { border-top: 3px solid #222; top: 9px; }

/* 主工具栏 */
.toolbar {
  display: flex;
  height: 39px;
  align-items: center;
  border-bottom: 2px solid #262626;
}
.grip { width: 5px; height: 34px; margin: 0 0 0 3px; border: solid #1c1c1c; border-width: 0 1px; }
.toolbar button { width: 32px; height: 30px; position: relative; }
.toolbar button svg { width: 24px; height: 24px; }
.toolbar .active { background: #5b86c2; border-radius: 3px; width: 30px; margin: 0 1px; }
.fly::after {
  content: "";
  position: absolute;
  right: 2px;
  bottom: 0;
  border: 2px solid #eee;
  border-left-color: transparent;
  border-top-color: transparent;
}
.sep { width: 2px; height: 16px; margin: 0 2px; background: #222; }
.toolbar .combo { width: 69px; height: 20px; margin: 0 0 8px 1px; background: #606060; color: #ddd; font-size: 11px; }
.toolbar .wide { width: 118px; font-size: 12px; }
.toolbar .wide select { padding-left: 2px; }
.toolbar-end { width: 3px; height: 38px; border-right: 1px solid #111; }

/* 功能区 */
.ribbon { border-left: 10px solid #383838; }
.ribbon-tabs { display: flex; height: 20px; background: #525252; border: solid #606060; border-width: 1px 0 0; color: #aaa; }
.ribbon-tabs button { width: 88px; }
.ribbon-tabs button:first-child { width: 72px; padding-left: 10px; }
.ribbon-tabs button:nth-child(2) { width: 80px; }
.ribbon-tabs button:nth-child(3) { padding-left: 12px; }
.ribbon-tabs button:nth-child(4) { width: 96px; }
.ribbon-tabs .current { width: 58px; margin-left: 4px; padding-left: 16px; background: #707070; border: 1px solid #333; border-bottom: 0; color: #eee; }
.ribbon-tabs .ribbon-toggle { width: 70px; padding-left: 4px; }
.ribbon-panels { display: flex; height: 20px; background: linear-gradient(#484848, #3a3a3a); border-top: 1px solid #2c2c2c; padding-left: 2px; }
.ribbon-panels button { padding: 0 5px; height: 19px; border: solid #5a5a5a; border-width: 0 1px 1px 0; }

/* 左侧 */
.main { flex: 1; min-height: 0; display: flex; }
.dock {
  width: 39px;
  background: #333;
  border-right: 1px solid #222;
  display: flex;
  flex-direction: column;
  justify-content: flex-end;
  align-items: center;
  gap: 12px;
  padding-bottom: 2px;
}
.play { width: 19px; height: 19px; background: #555; border-radius: 3px; }
.layout { width: 35px; height: 43px; align-self: flex-end; background: linear-gradient(#5a7ba4, #3f7fd0); border-radius: 3px 0 0 3px; }
.explorer {
  width: 271px;
  display: flex;
  flex-direction: column;
  border: 1px solid #1a1a1a;
  border-width: 4px 2px 2px 1px;
  border-top-color: #3a3a3a;
}
.explorer-menu { display: flex; gap: 20px; padding-left: 17px; height: 29px; }
.explorer-search { display: flex; align-items: center; height: 24px; padding-left: 6px; }
.explorer-search input { width: 150px; height: 24px; border: 1px solid #666; }
.clear { width: 24px; }
.on { background: #5b86c2; }
.explorer-search .on, .explorer-foot .on { width: 24px; height: 24px; }
.explorer-search .bar { margin-left: 2px; }
.bar { width: 1px; height: 22px; background: #222; }
.explorer-foot .bar { background: #777; margin: 0 2px; }
.lock { width: 32px; }
.more { color: #5353a0; font-size: 14px; margin-left: auto; padding-right: 4px; align-self: flex-start; line-height: 12px; }
.explorer-body { flex: 1; display: flex; gap: 3px; padding: 3px 4px 2px 2px; min-height: 0; }
.filters { display: flex; flex-direction: column; gap: 3px; width: 22px; padding-top: 3px; }
.filters button { height: 20px; }
.filters svg { width: 16px; height: 16px; fill: #e6e6e6; }
.filters .lines { fill: none; stroke: #e6e6e6; stroke-width: 1; }
.filters .dim svg { fill: #999; }
.rule { height: 1px; background: #777; margin: 1px 2px; }
.object-list { flex: 1; border: 1px solid #555; }
.list-head { width: 100%; height: 19px; justify-content: space-between; padding: 0 2px; border-bottom: 1px solid #555; }
.list-head i { font-style: normal; font-size: 9px; }
.object-list li { display: flex; align-items: center; gap: 1px; padding-left: 18px; height: 20px; }
.object-list li span { flex: 1; background: #808080; color: #fff; margin-left: 2px; padding-left: 3px; line-height: 18px; }
.explorer-foot { height: 28px; display: flex; align-items: center; padding-left: 6px; }
.plain { width: 158px; height: 22px; color: #ff0; margin-right: 2px; }
.plain::after { right: 2px; }
.plain select { width: 145px; border: 1px solid #666; padding-left: 1px; }
.explorer-foot button { width: 24px; }

/* 视口 */
.work { flex: 1; min-width: 0; display: flex; flex-direction: column; }
.work-top { flex: 1; min-height: 0; display: flex; padding-top: 1px; background: #383838; }
.viewports {
  flex: 1;
  display: grid;
  grid-template: 1fr 1fr / 1fr 1fr;
  gap: 4px;
  padding-right: 4px;
  background: #444;
}
.viewport { position: relative; min-width: 0; min-height: 0; border: 2px solid #3a3a3a; background: #353535; overflow: hidden; }
.viewport.selected { border-color: #7b6f2c; }
.shaded { background: linear-gradient(#1b1b1b, #4d4d4d); }
.canvas { width: 100%; height: 100%; }
.view-label { position: absolute; left: 5px; top: 6px; display: flex; gap: 6px; font-size: 11px; line-height: 16px; color: #ddd; white-space: pre; }
.canvas text { font-size: 11px; }
.spline { fill: none; stroke: #5ff; stroke-width: 3; }
.pivot { fill: none; stroke: #ccc; }
.canvas .yl { fill: #dd3; }
.canvas .gl { fill: #0a8a0a; }
.canvas .bl { fill: #2020d0; }
.canvas .rl { fill: #a01010; }
.canvas .cube { fill: #747474; font-size: 15px; }
.canvas .tiny { font-size: 10px; }
.canvas .dir { fill: #a5a8aa; font-size: 10px; }

/* 命令面板 */
.command { width: 200px; padding: 2px 5px 0 5px; background: #444; border-left: 1px solid #383838; }
.command-tabs { display: flex; margin: 0 -5px; background: #3a3a3a; }
.command-tabs button { width: 32px; height: 25px; }
.command-tabs .current { background: #444; }
.command-tabs svg { width: 16px; height: 16px; }
.object-name { display: flex; gap: 6px; margin: 8px 0 11px; }
.object-name input { width: 165px; height: 18px; background: #646464; padding: 0 2px; font-size: 11px; color: #ddd; }
.swatch { width: 17px; height: 18px; background: #f3c498; border: 1px solid #111; }
.modifiers { height: 19px; background: #5e5e5e; }
.modifiers select { padding-left: 3px; }
.stack { height: 127px; margin-top: 6px; border: 1px solid #fff; }
.stack li { display: flex; align-items: center; height: 17px; padding: 0 5px 0 3px; border-bottom: 1px solid #777; color: #fff; font-size: 11px; }
.stack li span { flex: 1; padding-left: 4px; }
.stack li .indent { padding-left: 24px; }
.stack .current { background: linear-gradient(90deg, #444 20px, #5b86c2 20px); }
.stack-tools { display: flex; align-items: center; height: 34px; }
.stack-tools button { width: 24px; height: 22px; }
.stack-tools .on { border-radius: 3px; width: 22px; }
.stack-tools .bar { width: 2px; height: 16px; margin: 0 5px; }
.splitter { height: 21px; display: flex; justify-content: center; align-items: center; background: linear-gradient(#666, #666) center / 100% 1px no-repeat; }
.splitter i { width: 14px; height: 4px; background: #444; border: dotted #aaa; border-width: 1px 0; }
.rollout { margin: -1px 7px 0 -1px; padding-bottom: 10px; background: #525252; font-size: 11px; line-height: 16px; color: #eee; }
.rollout h2 { display: flex; align-items: center; gap: 4px; height: 20px; padding: 0 4px 0 3px; font-size: 12px; }
.rollout h2 span { margin-left: auto; color: #888; font-weight: normal; }
.spin { display: flex; align-items: center; justify-content: flex-end; gap: 5px; margin: 8px 30px 0 0; height: 16px; }
.spin + .spin { margin-top: 4px; }
.spin input, .coord-row input {
  width: 68px;
  height: 15px;
  padding-left: 3px;
  color: #ddd;
  background:
    radial-gradient(circle, #ddd 1px, transparent 2px) right 0 top 0 / 7px 7px no-repeat,
    radial-gradient(circle, #ddd 1px, transparent 2px) right 0 bottom 1px / 7px 7px no-repeat,
    #646464;
}
.spin .focus { border: 1px solid #ddd; }
.rollout fieldset { margin: 1px 15px 3px 14px; padding: 0 0 4px; border: 1px solid #3c3c3c; border-radius: 2px; min-width: 0; }
.rollout fieldset + fieldset { margin: 0 15px 0 14px; padding-bottom: 2px; }
.rollout legend { margin-left: 4px; padding: 0 1px; }
.rollout label { display: flex; align-items: center; gap: 4px; }
.rollout fieldset label { height: 18px; }
.rollout .in { margin-left: 46px; }
.pair { display: flex; justify-content: space-between; padding: 0 21px 0 26px; }
.checks { padding: 3px 0 0 19px; }
.checks .sub { margin-left: 16px; }
.off { color: #7a7a7a; }
.rollout [type=checkbox], .rollout [type=radio] {
  appearance: none;
  width: 10px;
  height: 10px;
  background: #666;
  display: grid;
  place-items: center;
}
.rollout [type=radio] { border-radius: 50%; }
.rollout [type=checkbox]:checked::after { content: ""; width: 4px; height: 7px; border: solid #fff; border-width: 0 2px 2px 0; transform: rotate(40deg); }
.rollout [type=radio]:checked::after { content: ""; width: 7px; height: 7px; border-radius: 50%; background: #fff; }
.rollout [type=checkbox]:disabled { background: #5c5c5c; }

/* 时间轴 */
.time-slider { display: flex; gap: 2px; height: 19px; padding: 0 0 2px 1px; color: #ddd; font-size: 11px; }
.time-slider button { width: 14px; background: #606060; border-radius: 2px; }
.time-slider .frame { width: 124px; }
.track { display: flex; height: 26px; border-top: 1px solid #111; }
.curve { width: 52px; padding-right: 12px; }
.ruler { flex: 1; display: flex; justify-content: space-between; padding: 0 260px 0 4px; background: #2b2b2b; }
.tick { width: 0; display: flex; flex-direction: column; align-items: center; color: #ccc; font-size: 11px; line-height: 14px; }
.tick::before { content: ""; flex: none; width: 1px; height: 11px; background: #777; }
.tick.now::before { width: 6px; height: 25px; background: #7f7a28; margin-bottom: -14px; }
.tick.now { color: #ee4; }

/* 状态栏 */
.status { display: flex; height: 51px; font-size: 11px; }
.listener { width: 105px; padding: 3px 6px 0 2px; border-right: 1px solid #111; }
.listener input { display: block; width: 97px; height: 22px; border: 1px solid #fff; background: #dcc4c4; margin-bottom: 1px; }
.listener input + input { background: #fff; color: #000; padding-left: 4px; font: 12px "Liberation Mono", "Noto Sans CJK SC", monospace; }
.prompts { padding: 2px 0 0 4px; line-height: 26px; flex: 1; }
.coords { width: 415px; padding-top: 5px; }
.coord-row { display: flex; align-items: center; height: 20px; white-space: nowrap; }
.coord-row button { width: 27px; flex: none; }
.coord-row label { display: flex; align-items: center; gap: 2px; margin-right: 4px; }
.coord-row label:first-of-type { margin-left: 3px; }
.coord-row input { height: 17px; color: #ccc; }
.time-tag { gap: 6px; height: 22px; margin: 3px 0 0 311px; }
.nav-tools { width: 481px; padding: 6px 4px 0; display: flex; flex-direction: column; gap: 8px; align-items: flex-end; }

/* 任务栏 */
.taskbar { display: flex; height: 39px; background: linear-gradient(90deg, #1c2827, #30301c 400px, #383624); }
.start { width: 48px; }
.search { width: 343px; display: flex; align-items: center; gap: 8px; padding-left: 12px; background: #f2f2f2; }
.search input { flex: 1; color: #222; font-size: 14px; }
.taskbar > button { width: 49px; }
.taskbar > button > svg { width: 24px; height: 24px; }
.taskbar > .start > svg { width: 16px; height: 16px; }
.taskbar > .open { background: linear-gradient(#76b9ed, #76b9ed) bottom / 40px 2px no-repeat; }
.taskbar > .now { background: linear-gradient(#76b9ed, #76b9ed) bottom / 100% 2px no-repeat #5d5c4c; }

/* 站点标识 */
.brand {
  position: absolute;
  right: 15px;
  bottom: 2px;
  width: 456px;
  height: 226px;
  padding: 0 0 2px 39px;
  display: flex;
  align-items: center;
  background: #fff;
  color: #0a0a0a;
}
.brand-text { display: flex; flex-direction: column; font-style: italic; margin-left: -4px; }
.brand strong { font: italic 900 50px/48px "Noto Sans CJK SC", sans-serif; }
.brand span { font-size: 33px; font-weight: 500; line-height: 36px; padding-left: 4px; }
```
FILE: script.js
```js
// 时间标尺 0 - 100
const ruler = document.getElementById("ruler");
const lastLabel = 80;
for (let i = 0; i <= 100; i++) {
  const tick = document.createElement("span");
  tick.className = i === 0 ? "tick now" : "tick";
  if (i % 5 === 0 && i <= lastLabel) tick.textContent = i;
  ruler.appendChild(tick);
}

// 透视视口的地面栅格
const floor = document.getElementById("floor");

function project(u, v) {
  const w = 1 - 0.1683 * (u + v);
  const x = 349 + 166.5 * (u - v) / w;
  const y = 202 + 82.7 * (u + v) / w;
  return `${x.toFixed(1)} ${y.toFixed(1)}`;
}

function addLine(from, to, color) {
  const path = document.createElementNS("http://www.w3.org/2000/svg", "path");
  path.setAttribute("d", `M${from}L${to}`);
  path.setAttribute("stroke", color);
  floor.appendChild(path);
}

for (let i = -7; i <= 7; i++) {
  const t = i / 7;
  addLine(project(t, -1), project(t, 1), "#5c5c5c");
  addLine(project(-1, t), project(1, t), i === 0 ? "#000" : "#5c5c5c");
}
```
